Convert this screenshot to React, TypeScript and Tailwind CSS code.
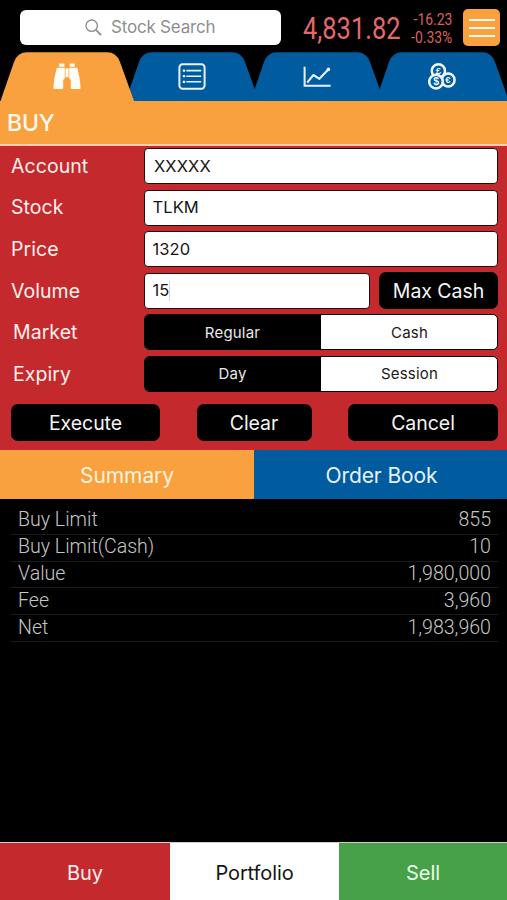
import type { ReactNode } from 'react';
import clsx from 'clsx';

const SUMMARY = [
  { label: 'Buy Limit', value: '855' },
  { label: 'Buy Limit(Cash)', value: '10' },
  { label: 'Value', value: '1,980,000' },
  { label: 'Fee', value: '3,960' },
  { label: 'Net', value: '1,983,960' },
];

function BinocularsIcon() {
  return (
    <svg width="28" height="27" viewBox="0 0 28 27" fill="#fffdf5">
      <path d="M6.2 0.6h5.2v3.2h-5.2zM16.6 0.6h5.2v3.2h-5.2z" />
      <path d="M3.8 4.8h8v10.4L10.2 17v8q0 1-1 1H1.4q-1 0-1-1L1.2 16z" />
      <path d="M24.2 4.8h-8v10.4l1.6 1.8v8q0 1 1 1h7.8q1 0 1-1L26.8 16z" />
      <path d="M12.5 5.4h3v8.8h-3z" />
    </svg>
  );
}

function ListIcon() {
  return (
    <svg width="28" height="27" viewBox="0 0 28 27" fill="none" stroke="#e6f3ff">
      <rect x="1.4" y="1.2" width="25.2" height="24.6" rx="3.2" strokeWidth="2" />
      <path d="M8.4 7.6h14.8M8.4 13.2h14.8M8.4 18.8h14.8" strokeWidth="1.6" />
      <path d="M4.8 7.6h2.4M4.8 13.2h2.4M4.8 18.8h2.4" strokeWidth="2.3" />
    </svg>
  );
}

function ChartIcon() {
  return (
    <svg width="28" height="27" viewBox="0 0 28 27" fill="none" stroke="#e6f3ff">
      <path d="M1.6 3.8v19h26" strokeWidth="2" />
      <path d="M4.2 19.6l6.2-7.6 6 3.8 8.6-9" strokeWidth="2.1" strokeLinejoin="round" />
      <circle cx="25.4" cy="6.4" r="1.8" fill="#e6f3ff" stroke="none" />
    </svg>
  );
}

function CoinsIcon() {
  return (
    <svg width="28" height="27" viewBox="0 0 28 27" fill="#005b9f" stroke="#f0f8ff" strokeWidth="2.5">
      <circle cx="10.4" cy="7.9" r="6.6" />
      <circle cx="20.2" cy="17" r="6.4" />
      <circle cx="8" cy="18.6" r="6.8" />
      <g fill="#f0f8ff" stroke="none" fontFamily="Liberation Sans" fontWeight="700" textAnchor="middle">
        <text x="10.4" y="11.4" fontSize="9.5">£</text>
        <text x="19.8" y="20.4" fontSize="9.5">€</text>
        <text x="8" y="22.2" fontSize="10.5">$</text>
      </g>
    </svg>
  );
}

function NavTab({ active, children }: { active?: boolean; children: ReactNode }) {
  return (
    <button
      className={clsx(
        'relative h-[49px] w-[134px] shrink-0 flex items-center justify-center',
        active ? 'z-10 text-[#f9a03f]' : '-ml-[9px] text-[#005b9f]'
      )}
    >
      <svg className="absolute inset-0" width="134" height="49" viewBox="0 0 134 49" fill="currentColor">
        <path d="M0.5 49L14 10Q17.5 0.3 27 0.3H107Q116.5 0.3 120 10L134 49Z" />
      </svg>
      <span className="relative">{children}</span>
    </button>
  );
}

function Row({ label, indent, children }: { label: string; indent?: boolean; children: ReactNode }) {
  return (
    <div className="flex h-9 items-center">
      <div className={clsx('w-[133px] shrink-0 pt-px text-[19.5px] tracking-[0.05px] text-[#fff1ee]', indent && 'pl-0.5')}>{label}</div>
      {children}
    </div>
  );
}

function Field({ value, focused, wide }: { value: string; focused?: boolean; wide?: boolean }) {
  return (
    <div
      className={clsx(
        'flex h-full min-w-0 flex-1 items-center rounded-[4px] border-[1.5px] border-[#26090a] bg-white text-[16.5px] text-[#151515]',
        wide ? 'pl-[9px] tracking-[0.1px]' : 'pl-[7.5px] tracking-[0.1px]'
      )}
    >
      {value}
      {focused && <span className="h-5 w-px bg-[#d5d3f5]" />}
    </div>
  );
}

function Segmented({ left, right }: { left: string; right: string }) {
  return (
    <div className="grid h-full flex-1 grid-cols-2 overflow-hidden rounded-[5px] border border-black bg-white text-[15px] tracking-[0.2px]">
      <div className="flex items-center justify-center bg-black pt-px pr-px text-[#e8e8e8]">{left}</div>
      <div className="flex items-center justify-center pt-px pl-px text-[#1a1a1a]">{right}</div>
    </div>
  );
}

function ActionButton({ className, children }: { className: string; children: ReactNode }) {
  return (
    <button
      className={clsx(
        'flex h-[37px] items-center justify-center rounded-[7px] bg-black pt-0.5 text-[19.5px] tracking-[-0.05px] text-[#f5f5f5]',
        className
      )}
    >
      {children}
    </button>
  );
}

export default function App() {
  return (
    <div className="flex h-[900px] w-[507px] flex-col overflow-hidden bg-black font-['Inter',sans-serif] tracking-[-0.2px]">
      {/* Search and index */}
      <header className="flex h-[52px] shrink-0 items-center pt-[3px] pl-5">
        <div className="flex h-[35px] w-[261px] items-center rounded-[6px] bg-white pl-[65px] text-[17px] text-[#8e8e93]">
          <svg className="mr-[9px]" width="17" height="17" viewBox="0 0 17 17" fill="none" stroke="#8e8e93" strokeWidth="1.4">
            <circle cx="6.7" cy="6.7" r="5.7" />
            <path d="M10.9 10.9l5.2 5.2" strokeWidth="1.8" />
          </svg>
          Stock Search
        </div>
        <div className="ml-[22px] w-[98px] font-['Roboto',sans-serif] text-[32px] leading-none tracking-normal text-[#e5686b]">
          <span className="inline-block origin-left scale-x-[0.795]">4,831.82</span>
        </div>
        <div className="flex w-[51px] flex-col items-end pt-px font-['Roboto',sans-serif] text-[17px] leading-[18px] tracking-normal text-[#d95f63]">
          <span className="block h-[18px] origin-right scale-x-[0.82]">-16.23</span>
          <span className="block h-[18px] origin-right scale-x-[0.82]">-0.33%</span>
        </div>
        <button className="ml-[11px] flex h-[37px] w-[37px] flex-col items-center justify-center gap-[6px] rounded-[5px] bg-[#f9a03f]">
          <span className="h-[2px] w-[26px] bg-[#fffaf0]" />
          <span className="h-[2px] w-[26px] bg-[#fffaf0]" />
          <span className="h-[2px] w-[26px] bg-[#fffaf0]" />
        </button>
      </header>

      <nav className="flex shrink-0 overflow-hidden">
        <NavTab active><BinocularsIcon /></NavTab>
        <NavTab><ListIcon /></NavTab>
        <NavTab><ChartIcon /></NavTab>
        <NavTab><CoinsIcon /></NavTab>
      </nav>

      <div className="flex h-[45px] shrink-0 items-center border-b-2 border-[#fbcfb0] bg-[#f9a03f] pt-0.5 pl-[7px] text-[23px] font-medium tracking-[-0.2px] text-[#fffaf0]">
        BUY
      </div>

      {/* Order form */}
      <section className="h-[304px] shrink-0 bg-[#c4292d] pt-0.5 pr-[9px] pl-[11px]">
        <div className="flex flex-col gap-[5.6px]">
          <Row label="Account"><Field value="XXXXX" wide /></Row>
          <Row label="Stock"><Field value="TLKM" /></Row>
          <Row label="Price"><Field value="1320" /></Row>
          <Row label="Volume">
            <Field value="15" focused />
            <ActionButton className="ml-[9px] w-[119px]">Max Cash</ActionButton>
          </Row>
          <Row label="Market" indent><Segmented left="Regular" right="Cash" /></Row>
          <Row label="Expiry" indent><Segmented left="Day" right="Session" /></Row>
        </div>
        <div className="mt-3 flex justify-between">
          <ActionButton className="w-[149px]">Execute</ActionButton>
          <ActionButton className="w-[115px]">Clear</ActionButton>
          <ActionButton className="w-[150px]">Cancel</ActionButton>
        </div>
      </section>

      <div className="grid h-[49px] shrink-0 grid-cols-[254px_1fr] text-[21px] tracking-[-0.1px]">
        <button className="bg-[#f9a03f] pt-0.5 text-[#fff3dc]">Summary</button>
        <button className="bg-[#005b9f] pt-0.5 pl-0.5 text-[#e6f3ff]">Order Book</button>
      </div>

      <div className="flex-1 pt-[9px] pr-[9px] pl-[11px] font-['Roboto',sans-serif] text-[19.6px] font-light tracking-normal text-[#c6c6c6]">
        {SUMMARY.map((row) => (
          <div key={row.label} className="flex h-[26.8px] items-center justify-between border-b border-[#1a1a1a] pr-[7px] pb-[1.5px] pl-[7px]">
            <span>{row.label}</span>
            <span>{row.value}</span>
          </div>
        ))}
      </div>

      <footer className="grid h-[58px] shrink-0 grid-cols-[170px_169px_168px] border-t border-[#cfcfcf] text-[20px] tracking-[-0.1px]">
        <button className="bg-[#c4292d] pt-0.5 text-[#ffeeee]">Buy</button>
        <button className="bg-white pt-0.5 text-[#151515]">Portfolio</button>
        <button className="bg-[#46a149] pt-0.5 text-[#eaffea]">Sell</button>
      </footer>
    </div>
  );
}
